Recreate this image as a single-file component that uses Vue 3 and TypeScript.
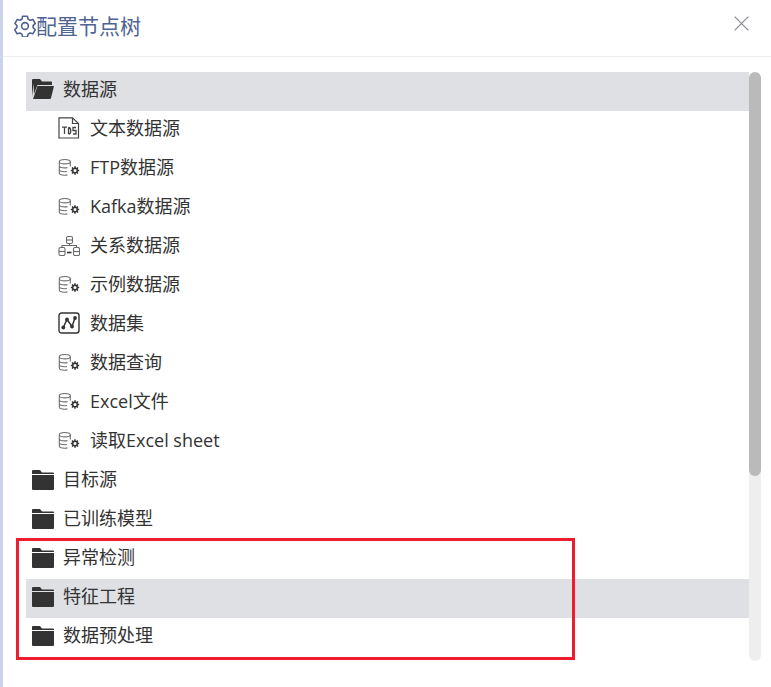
<script setup lang="ts">
type Row = { label: string; icon: string; child?: boolean; active?: boolean }
const rows: Row[] = [
  { label: '数据源', icon: 'open', active: true },
  { label: '文本数据源', icon: 'file', child: true },
  { label: 'FTP数据源', icon: 'db', child: true },
  { label: 'Kafka数据源', icon: 'db', child: true },
  { label: '关系数据源', icon: 'rel', child: true },
  { label: '示例数据源', icon: 'db', child: true },
  { label: '数据集', icon: 'set', child: true },
  { label: '数据查询', icon: 'db', child: true },
  { label: 'Excel文件', icon: 'db', child: true },
  { label: '读取Excel sheet', icon: 'db', child: true },
  { label: '目标源', icon: 'folder' },
  { label: '已训练模型', icon: 'folder' },
  { label: '异常检测', icon: 'folder' },
  { label: '特征工程', icon: 'folder', active: true },
  { label: '数据预处理', icon: 'folder' },
]
</script>

<template>
  <div class="page">
    <div class="strip"></div>
    <div class="dialog">
      <header class="head">
        <div class="title">
          <svg class="gear" viewBox="1 1 22 22" fill="none" stroke="#4f6392" stroke-width="1.600" stroke-linejoin="round">
            <path d="M9.600 2.200h4.800l.7 2.900 1.900 1.100 2.900-.8 2.300 4-2.100 2.200v2l2.100 2.200-2.300 4-2.900-.8-1.900 1.100-.7 2.900H9.600l-.7-2.900-1.900-1.100-2.900.8-2.300-4 2.100-2.200v-2L2 9.400l2.300-4 2.900.8 1.900-1.100z" />
            <circle cx="12" cy="12" r="3.400" />
          </svg>
          <span>配置节点树</span>
        </div>
        <svg class="close" viewBox="0 0 16 16" fill="none" stroke="#8c8f98" stroke-width="1.400">
          <path d="M.7.7l14.600 14.600M15.300.7L.7 15.300" />
        </svg>
      </header>
      <div class="body">
        <ul class="tree">
          <li v-for="row in rows" :key="row.label" class="row" :class="{ active: row.active, child: row.child }">
            <svg v-if="row.icon === 'folder'" class="ic-folder" viewBox="0 0 22 20">
              <path d="M0 1Q0 0 1 0h7l2 2.500h11q1 0 1 1V4H0z" fill="#333" />
              <path d="M0 5h22v14q0 1-1 1H1q-1 0-1-1z" fill="#333" />
            </svg>
            <svg v-else-if="row.icon === 'open'" class="ic-folder open" viewBox="0 0 22 20">
              <path d="M0 1Q0 0 1 0h7l2 2.500h9q1 0 1 1V6H5.500L2 15 1.500 4.500 0 18z" fill="#333" />
              <path d="M5.500 7H22l-3 12q-.2 1-1.200 1H1z" fill="#333" />
            </svg>
            <svg v-else-if="row.icon === 'file'" class="ic-child" viewBox="0 0 22 22" fill="none" stroke="#444" stroke-width="1.200">
              <path d="M1 .8h13.500l6 5.700V21H1z" />
              <path d="M14.500 .8v5.700h6" />
              <path d="M4 10.200h5M6.500 10.200V17M10.500 10.500V17M10.500 10.500c3 0 3 6.500 0 6.500M18 10.500h-3v3h3v3.500h-3" stroke-width="1.300" />
            </svg>
            <svg v-else-if="row.icon === 'db'" class="ic-child" viewBox="0 0 22 22" fill="none">
              <g transform="translate(0 1.500)">
                <g stroke="#6f6f6f" stroke-width="1.100">
                  <ellipse cx="6.800" cy="4.200" rx="5.500" ry="2.200" />
                  <path d="M1.300 4.200v11.300c0 1.200 2.400 2.200 5.500 2.200 1 0 1.900-.1 2.600-.3M12.300 4.200v4.800M1.300 8.200c0 1.200 2.400 2.200 5.500 2.200 1 0 1.900-.1 2.700-.3M1.300 12c0 1.200 2.400 2.200 5.500 2.200.8 0 1.500-.1 2.200-.2" />
                </g>
                <circle cx="17" cy="13" r="2.300" stroke="#333" stroke-width="1.500" />
                <path d="M17 8.800v1.900M17 15.300v1.900M12.800 13h1.900M19.300 13h1.900M14 10l1.300 1.300M18.700 14.700l1.300 1.300M20 10l-1.300 1.300M15.300 14.700L14 16" stroke="#333" stroke-width="1.500" />
              </g>
            </svg>
            <svg v-else-if="row.icon === 'rel'" class="ic-child" viewBox="0 0 22 22" fill="none" stroke="#6a6a6a" stroke-width="1.100">
              <rect x="8.500" y="2.500" width="6" height="7" rx="1.500" />
              <path d="M8.500 6h6" />
              <rect x="1" y="13.500" width="6" height="8" rx="1.500" />
              <path d="M1 17.500h6" />
              <rect x="15.500" y="13.500" width="6" height="8" rx="1.500" />
              <path d="M15.500 17.500h6" />
              <path d="M11.500 9.500v2H4v2M11.500 11.500h7v2" />
              <path d="M9 18.500h4.500" stroke="#333" stroke-width="1.600" />
            </svg>
            <svg v-else class="ic-child" viewBox="0 0 22 22" fill="none" stroke="#333">
              <rect x="1" y="1" width="20" height="20" rx="2.500" stroke-width="1.400" />
              <path d="M5.300 15.500L9 7.500l5 7 3-8.500" stroke-width="1.500" />
              <g fill="#333" stroke="none">
                <circle cx="5.300" cy="15.500" r="1.900" />
                <circle cx="9" cy="7.500" r="1.900" />
                <circle cx="14" cy="14.500" r="1.900" />
                <circle cx="17" cy="6" r="1.900" />
              </g>
            </svg>
            <span class="label">{{ row.label }}</span>
          </li>
        </ul>
        <div class="track"><div class="thumb"></div></div>
      </div>
    </div>
    <div class="mark"></div>
  </div>
</template>

<style scoped>
.page {
  position: relative;
  display: flex;
  width: 771px;
  height: 687px;
  overflow: hidden;
  background: #fff;
  font-family: "Open Sans", "Noto Sans CJK SC", sans-serif;
}
.strip {
  flex: none;
  width: 3px;
  background: #c9d4e8;
}
.dialog {
  flex: 1;
  min-width: 0;
}
.head {
  display: flex;
  align-items: center;
  justify-content: space-between;
  box-sizing: border-box;
  height: 57px;
  padding: 0 21px 5px 11px;
  border-bottom: 1px solid #ebedf0;
}
.title {
  display: flex;
  align-items: center;
  color: #4f6392;
  font-size: 21px;
  line-height: 28px;
}
.gear {
  width: 22px;
  height: 22px;
}
.close {
  width: 15px;
  height: 15px;
  margin: 0 1px 4px 0;
}
.body {
  display: flex;
  align-items: flex-start;
  padding: 15px 10px 0 23px;
}
.tree {
  flex: 1;
  min-width: 0;
  margin: 0;
  padding: 0;
  list-style: none;
}
.row {
  display: flex;
  align-items: center;
  box-sizing: border-box;
  height: 39px;
  padding: 0 0 5px 6px;
  color: #333;
  font-size: 18px;
}
.row.child {
  padding-left: 32px;
}
.row.active {
  background: #dfe0e4;
}
.ic-folder {
  flex: none;
  width: 22px;
  height: 20px;
  margin: 2px 9px 0 0;
}
.ic-folder.open {
  margin-top: 0;
}
.ic-child {
  flex: none;
  width: 22px;
  height: 22px;
  margin-right: 10px;
}
.label {
  line-height: 24px;
}
.track {
  flex: none;
  width: 12px;
  height: 589px;
  border-radius: 6px;
  background: #eeeeee;
}
.thumb {
  height: 404px;
  border-radius: 6px;
  background: #bababa;
}
.mark {
  position: absolute;
  left: 16px;
  top: 538px;
  box-sizing: border-box;
  width: 559px;
  height: 122px;
  border: 3px solid #ee1c2e;
  pointer-events: none;
}
</style>
